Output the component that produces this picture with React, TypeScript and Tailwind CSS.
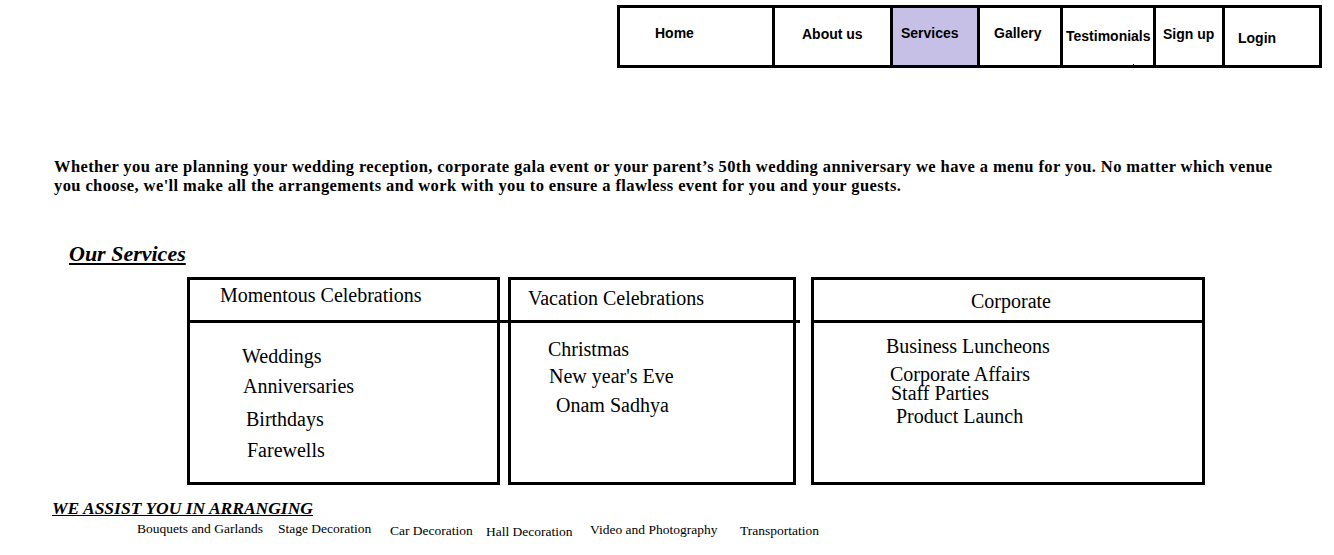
export default function App() {
  const serif = "font-['Liberation_Serif','Times_New_Roman',serif]";
  return (
    <div className={`w-[1334px] h-[555px] bg-white text-black overflow-hidden ${serif}`}>
      <nav className="ml-[617px] mt-[5px] w-[705px] h-[63px] border-[3px] border-black flex font-['Liberation_Sans',Arial,sans-serif] font-bold text-[14px] leading-[16px]">
        <div className="w-[152px] pl-[35px] pt-[17px]">Home</div>
        <div className="w-[118px] border-l-[3px] border-black pl-[27px] pt-[18px]">About us</div>
        <div className="w-[87px] border-l-[3px] border-black bg-[#c6c0e6] pl-[8px] pt-[17px]">Services</div>
        <div className="w-[83px] border-l-[3px] border-black pl-[14px] pt-[17px]">Gallery</div>
        <div className="w-[93px] border-l-[3px] border-black pl-[3px] pt-[20px] relative">
          Testimonials
          <span className="absolute left-[70px] bottom-0 w-px h-px bg-black" />
        </div>
        <div className="w-[69px] border-l-[3px] border-black pl-[7px] pt-[18px]">Sign up</div>
        <div className="w-[97px] border-l-[3px] border-black pl-[13px] pt-[22px]">Login</div>
      </nav>

      <p className="mt-[89px] pl-[54px] font-bold text-[16.5px] tracking-[0.4px] leading-[19px] whitespace-nowrap">
        Whether you are planning your wedding reception, corporate gala event or your parent’s 50th wedding anniversary we have a menu for you. No matter which venue
        <br />
        you choose, we'll make all the arrangements and work with you to ensure a flawless event for you and your guests.
      </p>

      <h2 className="mt-[46px] pl-[69px] font-bold italic underline text-[22px] leading-[26px]">Our Services</h2>

      <div className="mt-[10px] ml-[187px] flex items-start text-[20px] leading-[24px]">
        <div className="w-[313px] h-[208px] border-[3px] border-black flex flex-col">
          <div className="h-[40px] pl-[30px] pt-[3px] whitespace-nowrap">Momentous Celebrations</div>
          <div className="h-[3px] bg-black mr-[-5px]" />
          <div className="pt-[21px] flex flex-col items-start whitespace-nowrap">
            <span className="pl-[52px]">Weddings</span>
            <span className="pl-[53px] mt-[6px]">Anniversaries</span>
            <span className="pl-[56px] mt-[9px]">Birthdays</span>
            <span className="pl-[57px] mt-[7px]">Farewells</span>
          </div>
        </div>
        <div className="ml-[8px] w-[288px] h-[208px] border-[3px] border-black flex flex-col">
          <div className="h-[40px] pl-[17px] pt-[6px] whitespace-nowrap">Vacation Celebrations</div>
          <div className="h-[3px] bg-black ml-[-11px] mr-[-7px]" />
          <div className="pt-[14px] flex flex-col items-start whitespace-nowrap">
            <span className="pl-[37px]">Christmas</span>
            <span className="pl-[38px] mt-[3px]">New year's Eve</span>
            <span className="pl-[45px] mt-[5px]">Onam Sadhya</span>
          </div>
        </div>
        <div className="ml-[15px] w-[394px] h-[208px] border-[3px] border-black flex flex-col">
          <div className="h-[40px] pl-[6px] pt-[9px] text-center whitespace-nowrap">Corporate</div>
          <div className="h-[3px] bg-black ml-[-3px]" />
          <div className="pt-[11px] flex flex-col items-start whitespace-nowrap">
            <span className="pl-[72px]">Business Luncheons</span>
            <span className="pl-[76px] mt-[4px]">Corporate Affairs</span>
            <span className="pl-[77px] mt-[-5px]">Staff Parties</span>
            <span className="pl-[82px] mt-[-1px]">Product Launch</span>
          </div>
        </div>
      </div>

      <h3 className="mt-[12px] pl-[52px] font-bold italic underline text-[17.5px] leading-[22px] whitespace-nowrap">WE ASSIST YOU IN ARRANGING</h3>

      <div className="mt-[2px] ml-[137px] flex items-start text-[13.5px] leading-[16px] whitespace-nowrap">
        <span className="w-[141px]">Bouquets and Garlands</span>
        <span className="w-[112px]">Stage Decoration</span>
        <span className="w-[96px] mt-[2px]">Car Decoration</span>
        <span className="w-[104px] mt-[3px]">Hall Decoration</span>
        <span className="w-[150px] mt-[1px]">Video and Photography</span>
        <span className="mt-[2px]">Transportation</span>
      </div>
    </div>
  );
}
